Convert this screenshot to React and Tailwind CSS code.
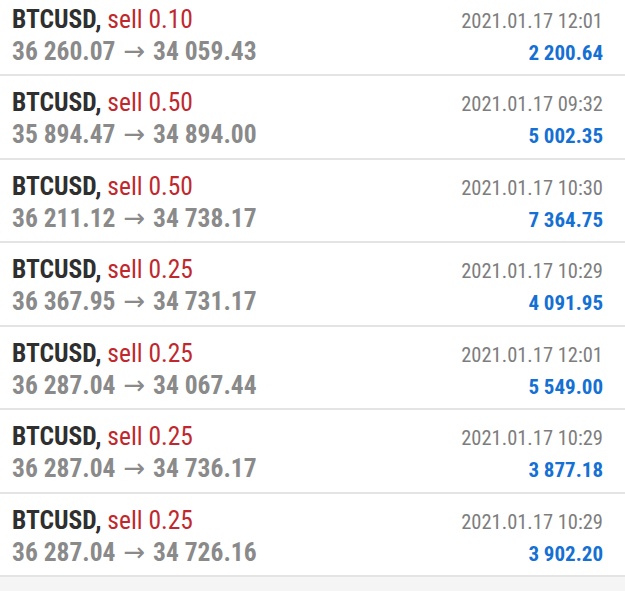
const trades = [
  { lots: '0.10', open: '36 260.07', close: '34 059.43', time: '2021.01.17 12:01', profit: '2 200.64' },
  { lots: '0.50', open: '35 894.47', close: '34 894.00', time: '2021.01.17 09:32', profit: '5 002.35' },
  { lots: '0.50', open: '36 211.12', close: '34 738.17', time: '2021.01.17 10:30', profit: '7 364.75' },
  { lots: '0.25', open: '36 367.95', close: '34 731.17', time: '2021.01.17 10:29', profit: '4 091.95' },
  { lots: '0.25', open: '36 287.04', close: '34 067.44', time: '2021.01.17 12:01', profit: '5 549.00' },
  { lots: '0.25', open: '36 287.04', close: '34 736.17', time: '2021.01.17 10:29', profit: '3 877.18' },
  { lots: '0.25', open: '36 287.04', close: '34 726.16', time: '2021.01.17 10:29', profit: '3 902.20' },
]

const TradeRow = ({ t }) => (
  <div className="h-[83.5px] bg-white border-b-2 border-[#e4e4e4] pl-[12px] pr-[22px] pt-[11px]">
    <div className="flex items-baseline justify-between leading-[30px]">
      <div className="text-[25.5px] font-bold text-[#2f2f2f]">
        BTCUSD, <span className="font-normal text-[#c0282d]">sell {t.lots}</span>
      </div>
      <div className="text-[20.5px] text-[#7d7d7d]">{t.time}</div>
    </div>
    <div className="flex items-baseline justify-between leading-[30px]">
      <div className="text-[25.5px] font-bold text-[#8a8a8a]">
        {t.open} <span className="mx-[2px] font-['DejaVu_Sans'] text-[26px] font-normal leading-[0px]">→</span> {t.close}
      </div>
      <div className="text-[21px] font-bold text-[#1570d4]">{t.profit}</div>
    </div>
  </div>
)

export default function App() {
  return (
    <div className="h-[591px] overflow-hidden bg-[#f5f5f5] font-['Roboto_Condensed',Roboto,sans-serif]">
      <div className="-mt-[7.5px]">
        {trades.map((t, i) => (
          <TradeRow key={i} t={t} />
        ))}
      </div>
    </div>
  )
}
